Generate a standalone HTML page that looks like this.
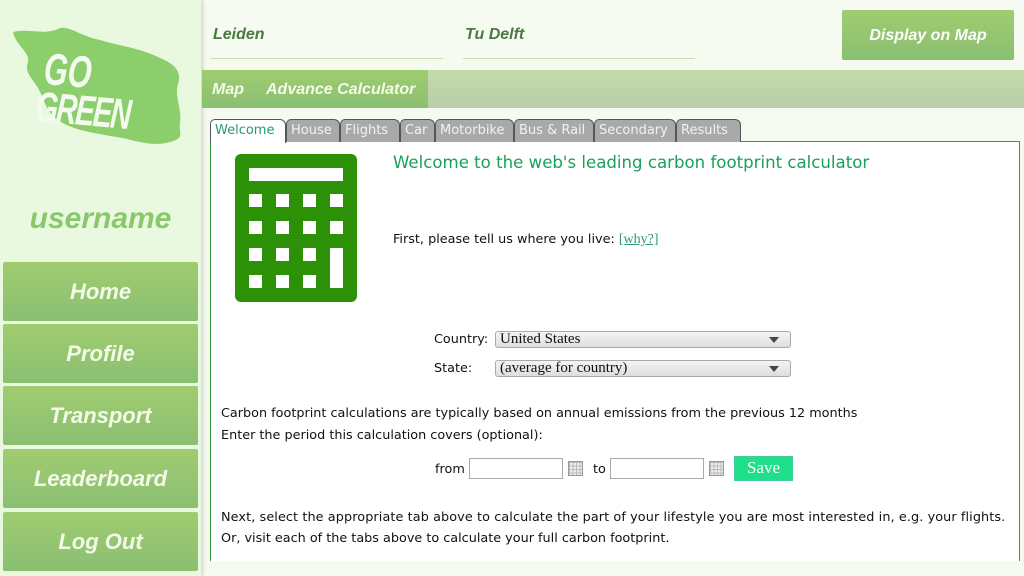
<!DOCTYPE html>
<html><head><meta charset="utf-8"><style>
*{margin:0;padding:0;box-sizing:border-box}
body{width:1024px;height:576px;overflow:hidden;background:#f6fbf1;font-family:"DejaVu Sans","Liberation Sans",sans-serif;position:relative}
.side{position:absolute;left:0;top:0;width:201px;height:576px;background:#e8f9e0;box-shadow:2px 0 4px rgba(0,0,0,.15)}
.fun{font-family:"Liberation Sans",sans-serif;font-weight:bold;font-style:italic}
.btn{position:absolute;left:3px;width:195px;height:59px;border-radius:2px;background:linear-gradient(#a0cc70,#8abf72);color:#f3fbe8;font-size:22px;text-align:center;line-height:60px}
.user{position:absolute;top:202px;left:0;width:201px;text-align:center;color:#8ac86a;font-size:30px}
.inp{position:absolute;top:26px;height:33px;border-bottom:1px solid #c5dfae;color:#4a7a40;font-size:16px;padding-left:2px}
.disp{position:absolute;left:842px;top:10px;width:172px;height:50px;border-radius:2px;background:linear-gradient(#a0cc70,#8abf72);color:#fff;font-size:16px;text-align:center;line-height:52px}
.nav{position:absolute;left:202px;top:70px;width:822px;height:38px;background:linear-gradient(#c2dba8,#bccdac)}
.nav .act{position:absolute;left:0;top:0;width:226px;height:38px;background:linear-gradient(#a0cc70,#8abf72)}
.nav span{position:absolute;top:11px;color:#f4fbe8;font-size:16px}
.tab{position:absolute;top:119px;height:23px;background:#a9a9a9;border:1px solid #555;border-bottom:none;border-radius:5px 6px 0 0;color:#f2f2f2;font-size:13px;line-height:21px;padding-left:4px}
.panel{position:absolute;left:210px;top:141px;width:810px;height:420px;border:1px solid #3a9a3a;border-bottom:none;background:#fff}
.t{position:absolute;font-size:12.8px;color:#111}
.sel{position:absolute;left:495px;width:296px;height:17px;border:1px solid #aaa;border-radius:3px;background:linear-gradient(#f4f4f4,#dedede);font-family:"Liberation Serif",serif;font-size:15px;line-height:15px;padding-left:4px;color:#111}
.sel:after{content:"";position:absolute;right:11px;top:5px;border-left:5px solid transparent;border-right:5px solid transparent;border-top:6px solid #444}
.box{position:absolute;top:458px;width:94px;height:21px;border:1px solid #aaa;background:#fff}
.cal{position:absolute;top:461px;width:15px;height:15px;border:1px solid #999;background:repeating-linear-gradient(90deg,#bbb 0 1px,transparent 1px 3.5px),repeating-linear-gradient(#bbb 0 1px,#eee 1px 3.5px)}
</style></head><body>
<div class="side">
<svg style="position:absolute;left:10px;top:22px" width="178" height="130" viewBox="0 0 178 130">
<path d="M3 10 C20 6 35 14 50 6 C60 4 70 14 90 18 C110 24 130 26 150 36 C165 42 172 50 168 62 C164 74 172 86 170 100 C168 110 176 116 160 120 C140 126 120 116 100 114 C80 110 62 108 48 98 C36 90 34 76 28 66 C22 56 14 50 18 40 C20 30 6 24 3 10 Z" fill="#8ccd6c"/>
<g transform="rotate(5 40 50) scale(0.85 1.25)">
<text x="40" y="50" fill="#f3fbee" font-family="Liberation Sans" font-weight="bold" font-style="italic" font-size="36">GO</text>
<text x="34" y="80" fill="#f3fbee" font-family="Liberation Sans" font-weight="bold" font-style="italic" font-size="34" letter-spacing="-2">GREEN</text></g>
</svg>
<div class="user fun">username</div>
<div class="btn fun" style="top:262px">Home</div>
<div class="btn fun" style="top:324px">Profile</div>
<div class="btn fun" style="top:386px">Transport</div>
<div class="btn fun" style="top:449px">Leaderboard</div>
<div class="btn fun" style="top:512px">Log Out</div>
</div>
<div class="inp fun" style="left:211px;width:232px">Leiden</div>
<div class="inp fun" style="left:463px;width:232px">Tu Delft</div>
<div class="disp fun">Display on Map</div>
<div class="nav"><div class="act"></div><span class="fun" style="left:10px">Map</span><span class="fun" style="left:64px">Advance Calculator</span></div>
<div class="panel"></div>
<div class="tab" style="left:210px;width:76px;background:#fff;color:#2a9a6a;border-color:#555;height:24px;z-index:2">Welcome</div>
<div class="tab" style="left:286px;width:54px">House</div>
<div class="tab" style="left:340px;width:60px">Flights</div>
<div class="tab" style="left:400px;width:35px">Car</div>
<div class="tab" style="left:435px;width:79px">Motorbike</div>
<div class="tab" style="left:514px;width:80px">Bus &amp; Rail</div>
<div class="tab" style="left:594px;width:82px">Secondary</div>
<div class="tab" style="left:676px;width:65px">Results</div>
<svg style="position:absolute;left:235px;top:154px" width="122" height="148"><rect width="122" height="148" rx="6" fill="#2d9108"/><rect x="14" y="14" width="94" height="13" fill="#fff"/>
<g fill="#fff"><rect x="14" y="40" width="13" height="13"/><rect x="41" y="40" width="13" height="13"/><rect x="68" y="40" width="13" height="13"/><rect x="95" y="40" width="13" height="13"/>
<rect x="14" y="67" width="13" height="13"/><rect x="41" y="67" width="13" height="13"/><rect x="68" y="67" width="13" height="13"/><rect x="95" y="67" width="13" height="13"/>
<rect x="14" y="94" width="13" height="13"/><rect x="41" y="94" width="13" height="13"/><rect x="68" y="94" width="13" height="13"/><rect x="95" y="94" width="13" height="40"/>
<rect x="14" y="121" width="13" height="13"/><rect x="41" y="121" width="13" height="13"/><rect x="68" y="121" width="13" height="13"/></g></svg>
<div class="t" style="left:393px;top:153px;font-size:16.6px;color:#1aa05a">Welcome to the web's leading carbon footprint calculator</div>
<div class="t" style="left:393px;top:232px">First, please tell us where you live: <span style="font-family:'Liberation Serif',serif;font-size:14px;color:#2a9a6a;text-decoration:underline">[why?]</span></div>
<div class="t" style="left:434px;top:332px">Country:</div><div class="sel" style="top:331px">United States</div>
<div class="t" style="left:434px;top:361px">State:</div><div class="sel" style="top:360px">(average for country)</div>
<div class="t" style="left:221px;top:406px">Carbon footprint calculations are typically based on annual emissions from the previous 12 months</div>
<div class="t" style="left:221px;top:428px">Enter the period this calculation covers (optional):</div>
<div class="t" style="left:435px;top:462px">from</div><div class="box" style="left:469px"></div><div class="cal" style="left:568px"></div>
<div class="t" style="left:593px;top:462px">to</div><div class="box" style="left:610px"></div><div class="cal" style="left:709px"></div>
<div style="position:absolute;left:734px;top:456px;width:59px;height:25px;background:#1ee08a;border:1px solid #4c9;color:#fff;font-family:'Liberation Serif',serif;font-size:17px;text-align:center;line-height:22px">Save</div>
<div class="t" style="left:221px;top:510px;letter-spacing:0.1px">Next, select the appropriate tab above to calculate the part of your lifestyle you are most interested in, e.g. your flights.</div>
<div class="t" style="left:221px;top:531px">Or, visit each of the tabs above to calculate your full carbon footprint.</div>
</body></html>
